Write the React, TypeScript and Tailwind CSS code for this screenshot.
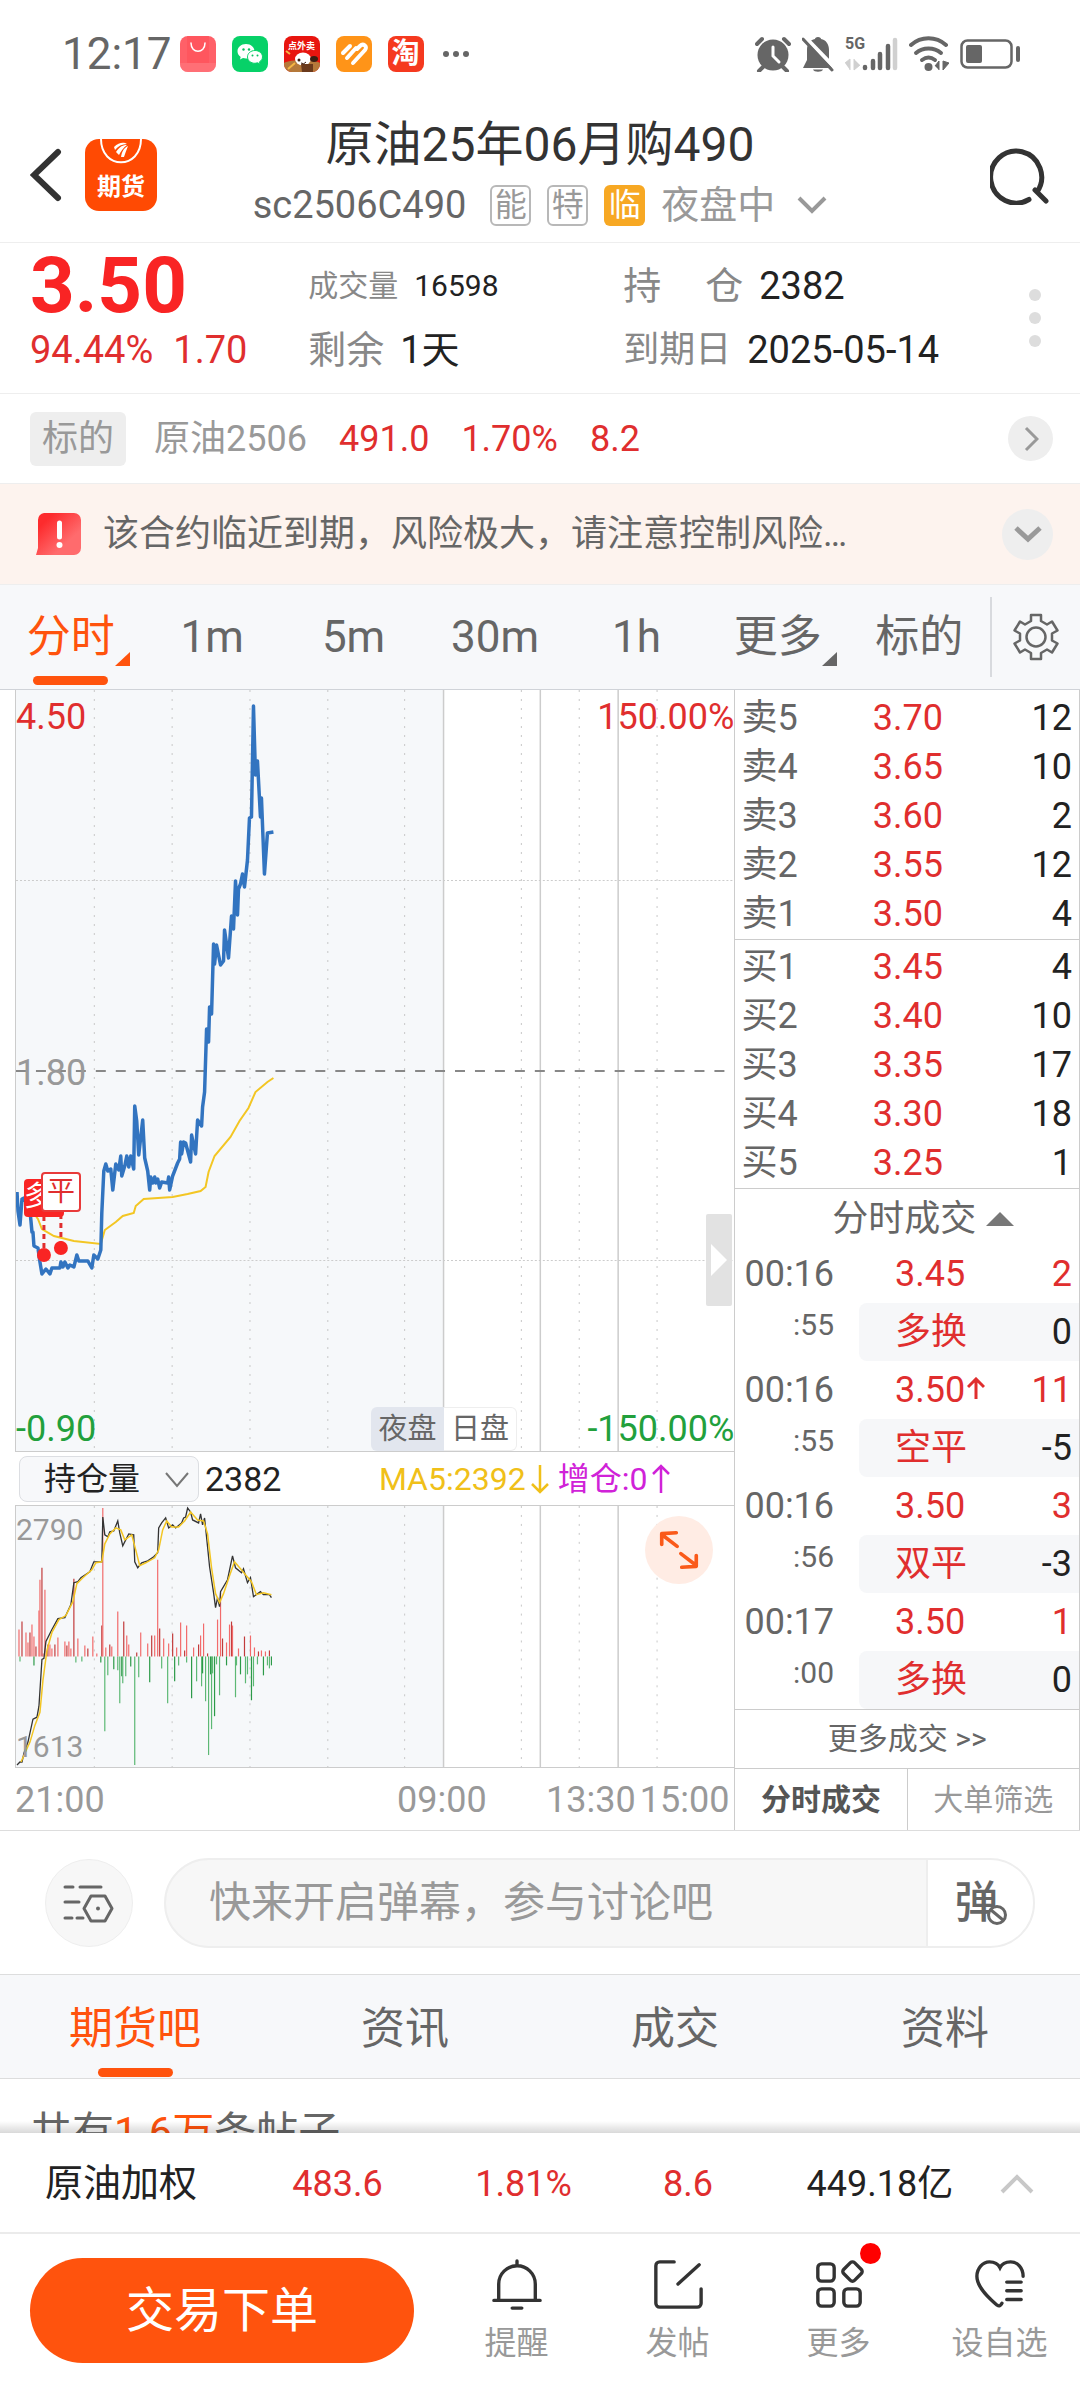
import React from 'react';

/**
 * Option contract quote page: header, intraday chart, order book and trade bar
 */

interface BookRow {
  label: string;
  price: string;
  volume: number;
}

interface Trade {
  time: string;
  seconds: string;
  price: string;
  rising?: boolean;
  volume: number;
  kind: string;
  change: number;
}

const asks: BookRow[] = [
  { label: '卖5', price: '3.70', volume: 12 },
  { label: '卖4', price: '3.65', volume: 10 },
  { label: '卖3', price: '3.60', volume: 2 },
  { label: '卖2', price: '3.55', volume: 12 },
  { label: '卖1', price: '3.50', volume: 4 },
];

const bids: BookRow[] = [
  { label: '买1', price: '3.45', volume: 4 },
  { label: '买2', price: '3.40', volume: 10 },
  { label: '买3', price: '3.35', volume: 17 },
  { label: '买4', price: '3.30', volume: 18 },
  { label: '买5', price: '3.25', volume: 1 },
];

const trades: Trade[] = [
  { time: '00:16', seconds: ':55', price: '3.45', volume: 2, kind: '多换', change: 0 },
  { time: '00:16', seconds: ':55', price: '3.50', rising: true, volume: 11, kind: '空平', change: -5 },
  { time: '00:16', seconds: ':56', price: '3.50', volume: 3, kind: '双平', change: -3 },
  { time: '00:17', seconds: ':00', price: '3.50', volume: 1, kind: '多换', change: 0 },
];

// Chart series, in chart units (720 wide)
const priceLine =
  '1,502 2,521 4,535 6,509 8,508 14,521 15,531 16,542 17,542 18,556 22,558 24,572 26,584 30,579 34,584 36,578 44,578 45,572 47,577 49,572 52,578 54,575 58,577 61,565 63,571 72,571 76,578 78,565 82,569 85,560 86,523 88,481 90,474 92,481 95,479 97,500 100,474 103,480 105,466 106,486 109,476 111,466 113,477 115,466 118,479 119,416 121,431 123,465 127,430 129,468 132,481 134,500 135,487 137,493 139,487 140,493 142,489 144,498 146,492 152,493 153,487 154,500 157,486 162,473 164,469 165,452 166,464 168,452 170,453 175,472 176,445 180,464 182,430 186,436 187,417 189,402 191,339 193,352 194,317 196,324 198,254 199,274 201,255 205,275 208,271 209,240 213,268 216,226 218,239 220,191 222,225 223,199 225,194 227,184 229,197 232,170 234,128 236,127 238,16 240,85 242,71 245,127 246,108 249,184 252,143 258,142';

const averageLine =
  '14,518 22,529 26,539 38,546 58,551 85,554 89,540 100,532 107,526 118,523 120,516 128,509 157,507 172,504 185,501 190,497 193,482 199,466 215,447 224,431 233,418 240,402 252,392 258,388';

const interestLine =
  '1,260 4,257 6,257 8,248 12,237 17,214 21,212 23,201 26,154 28,153 30,136 36,124 42,113 49,112 55,99 58,77 62,76 65,72 74,66 78,56 86,56 87,11 89,29 92,31 94,26 98,25 102,15 104,27 107,40 113,28 118,29 119,56 122,62 126,57 132,55 138,51 142,47 143,22 146,17 150,12 153,22 157,19 160,22 166,17 168,12 170,11 172,2 175,6 177,14 183,17 185,8 187,19 189,12 192,41 194,61 198,87 200,102 202,92 204,101 205,86 212,74 217,50 220,62 226,67 228,63 232,77 235,72 238,91 245,86 248,89 254,89 256,92';

const interestMaLine =
  '5,257 9,248 14,237 19,220 24,207 27,175 31,145 36,127 43,114 50,110 57,96 61,78 67,72 76,64 80,57 86,56 89,38 94,28 100,22 105,24 109,34 116,29 120,44 124,60 130,57 139,52 143,44 147,24 151,15 156,21 163,21 169,15 175,6 182,14 188,15 192,28 196,62 200,88 204,97 208,88 214,70 219,56 225,63 230,69 236,76 241,89 248,87 256,89';

const increaseBars = [
  [3, 27], [6, 35], [10, 24], [12, 14], [14, 24], [16, 32], [18, 20], [20, 10], [23, 46], [24, 77], [26, 89],
  [27, 3], [29, 67], [32, 12], [34, 12], [36, 8], [39, 12], [42, 19], [49, 15], [51, 11], [53, 15], [55, 8],
  [58, 78], [62, 18], [69, 11], [72, 8], [77, 20], [81, 3], [86, 31], [87, 149], [90, 9], [94, 12], [96, 10],
  [102, 45], [108, 35], [111, 21], [113, 12], [121, 4], [125, 24], [132, 13], [136, 21], [139, 21], [142, 97],
  [144, 28], [148, 18], [153, 13], [157, 23], [161, 9], [165, 34], [169, 6], [171, 31], [178, 9], [183, 12],
  [185, 21], [188, 33], [192, 3], [202, 37], [205, 64], [207, 18], [211, 14], [214, 32], [216, 35], [217, 31],
  [223, 8], [229, 20], [235, 21], [239, 9], [243, 5], [246, 6], [250, 5], [254, 6],
];

const decreaseBars = [
  [4, 5], [18, 9], [60, 6], [66, 5], [85, 6], [89, 75], [92, 19], [98, 13], [102, 14], [104, 47], [106, 20],
  [107, 27], [110, 20], [115, 10], [119, 109], [123, 21], [134, 26], [146, 12], [152, 47], [159, 25], [163, 9],
  [171, 6], [176, 42], [181, 25], [186, 30], [187, 17], [190, 45], [193, 99], [195, 18], [196, 73], [197, 17],
  [199, 60], [201, 8], [204, 39], [211, 9], [220, 41], [221, 9], [225, 18], [230, 27], [232, 18], [236, 44],
  [238, 30], [242, 8], [248, 19], [252, 9], [254, 12], [256, 9],
];

const dottedColumns = [78, 156, 234, 312, 389, 506, 564, 642];
const solidColumns = [428, 525, 603];

const StatusBar = () => (
  <div className="flex h-[108px] shrink-0 items-center justify-between pl-[62px] pr-[60px] text-[#666]">
    <div className="flex items-center gap-4">
      <span className="-mr-2 text-[44px] leading-none">12:17</span>
      <svg className="size-9" viewBox="0 0 36 36">
        <rect width="36" height="36" rx="8" fill="#ff6068" />
        <path d="M7 0h22v27H7z" fill="#ff5058" opacity=".6" />
        <path d="M0 27h36v1a8 8 0 0 1-8 8H8a8 8 0 0 1-8-8z" fill="#ff7a80" opacity=".6" />
        <path d="M11 7c0 11 14 11 14 0" fill="none" stroke="#fff" strokeWidth="1.5" strokeLinecap="round" />
      </svg>
      <svg className="size-9" viewBox="0 0 36 36">
        <rect width="36" height="36" rx="8" fill="#07d168" />
        <path d="M14 8c-5 0-8.500 3.400-8.500 7.300 0 2.300 1.200 4.200 3.200 5.600L8 23.500l3-1.500 3 .6c5 0 8.500-3.300 8.500-7.300S19 8 14 8z" fill="#fff" />
        <path d="M23 14.500c-4.300 0-7.500 2.900-7.500 6.400s3.200 6.400 7.500 6.400l2.600-.5 2.600 1.400-.7-2.400c1.900-1.200 3-2.900 3-4.900 0-3.500-3.200-6.400-7.500-6.400z" fill="#fff" stroke="#07d168" strokeWidth="1" />
        <g fill="#07c160">
          <circle cx="11.500" cy="13.500" r="1.200" />
          <circle cx="17" cy="13.500" r="1.200" />
          <circle cx="20.500" cy="19.500" r="1" />
          <circle cx="25.500" cy="19.500" r="1" />
        </g>
      </svg>
      <span className="relative size-9 overflow-hidden rounded-lg bg-[#e8150f]">
        <svg className="absolute inset-0" viewBox="0 0 36 36">
          <path d="M0 27c6-4 30-4 36 0v9H0z" fill="#b5793a" />
          <ellipse cx="19" cy="23" rx="8" ry="6.500" fill="#fff" />
          <ellipse cx="30" cy="23" rx="4" ry="3" fill="#3a1d12" />
          <path d="M17 28h12v8H18z" fill="#6b3a1c" />
          <path d="M2 15l4 3M4 33l7-6" stroke="#f5b544" strokeWidth="2" />
          <circle cx="15" cy="24" r="1.500" fill="#3a1d12" />
          <path d="M17 27q3 2 5-1" stroke="#3a1d12" fill="none" />
        </svg>
        <span className="relative block pt-[5px] text-center text-[9px] leading-[10px] font-bold text-white">点外卖</span>
      </span>
      <svg className="size-9" viewBox="0 0 36 36">
        <rect width="36" height="36" rx="8" fill="#ff9418" />
        <g fill="none" stroke="#fff" strokeLinecap="round" strokeWidth="4">
          <path d="M7 17l7-7" />
          <path d="M11 22l9-10" />
          <path d="M17 27l12-13c3-4-2-7-5-4l-3 3" />
        </g>
      </svg>
      <span className="flex size-9 items-center justify-center rounded-lg bg-[#f5391f] text-[28px] leading-none font-bold text-white">淘</span>
      <svg className="h-9 w-8" viewBox="0 0 32 36" fill="#666">
        <circle cx="6" cy="18" r="3" />
        <circle cx="16" cy="18" r="3" />
        <circle cx="26" cy="18" r="3" />
      </svg>
    </div>
    <div className="flex items-center gap-[11px]">
      <svg className="size-9" viewBox="0 0 36 36">
        <circle cx="18" cy="19" r="15.500" fill="#666" />
        <path d="M2 8l5-5M34 8l-5-5M8 31l-4 4M28 31l4 4" stroke="#666" strokeWidth="4" strokeLinecap="round" />
        <path d="M18 11v9l6 6" fill="none" stroke="#fff" strokeWidth="3" strokeLinecap="round" />
      </svg>
      <svg className="h-9 w-8" viewBox="0 0 32 36">
        <path d="M16 1c-2 0-3 1-3 2-5 1-8 5-8 11v10L1 32h29l-3-7V14c0-6-3-10-8-11 0-1-1-2-3-2zM11 33.500h10c-1 3-9 3-10 0z" fill="#666" />
        <path d="M3 1l30 31" stroke="#fff" strokeWidth="4" />
        <path d="M1 3l29 31" stroke="#666" strokeWidth="3" strokeLinecap="round" />
      </svg>
      <div className="relative h-9 w-[53px]">
        <span className="absolute top-0 left-0 text-[16px] leading-4 font-bold">5G</span>
        <svg className="h-9 w-[53px]" viewBox="0 0 53 36">
          <path d="M0 27l5-4v11M9 23v11l6-5" fill="#d0d0d0" stroke="#d0d0d0" />
          <g strokeWidth="4.500" strokeLinecap="round" stroke="#666">
            <path d="M20 31v1M28 25v7M35 18v14M43 10v22" />
            <path d="M50 4v28" stroke="#d0d0d0" />
          </g>
        </svg>
      </div>
      <svg className="h-9 w-10" viewBox="0 0 40 36">
        <g fill="none" stroke="#666" strokeWidth="4" strokeLinecap="round">
          <path d="M2 9c10-9 25-9 35 0" />
          <path d="M7 17c7-6 18-6 25 0" />
          <path d="M13 24c4-3 9-3 13 0" />
        </g>
        <circle cx="19.500" cy="31" r="4" fill="#666" />
        <path d="M26 30l4-5v9M34 25v9l6-7z" fill="#666" stroke="#666" />
      </svg>
      <svg className="h-9 w-[60px]" viewBox="0 0 60 36">
        <rect x="1.500" y="4.500" width="50" height="27" rx="6" fill="none" stroke="#666" strokeWidth="2.500" />
        <rect x="6" y="9" width="16" height="18" rx="2" fill="#666" />
        <rect x="56" y="10" width="4" height="16" rx="2" fill="#666" />
      </svg>
    </div>
  </div>
);

const Header = () => (
  <header className="flex h-[135px] shrink-0 items-center border-b border-[#eee] px-[30px]">
    <div className="flex w-[130px] items-center gap-[23px]">
      <button type="button" aria-label="返回">
        <svg className="h-[54px] w-8" viewBox="0 0 32 54" fill="none" stroke="#333" strokeWidth="6" strokeLinecap="round">
          <path d="M28 4L4 27l24 23" />
        </svg>
      </button>
      <div className="relative size-[72px] shrink-0 overflow-hidden rounded-[14px] bg-[#ff4a03]">
        <svg className="absolute inset-0" viewBox="0 0 72 72">
          <path d="M16 0c0 31 40 31 40 0" fill="none" stroke="#fff" strokeWidth="2" />
          <path d="M29 8c5-5 10-5 13-3-5 0-9 2-12 6zM31 13c4-6 7-7 11-7-4 3-6 6-8 10zM36 18c1-6 3-9 7-11-2 5-3 8-4 11z" fill="#fff" />
        </svg>
        <span className="relative block pt-[34px] text-center text-[24px] leading-7 font-bold text-white">期货</span>
      </div>
    </div>
    <div className="flex flex-1 flex-col items-center">
      <h1 className="text-5xl leading-[60px] text-[#333]">原油25年06月购490</h1>
      <div className="flex h-[60px] items-center gap-4">
        <span className="mr-2 text-[38px] leading-none text-[#666]">sc2506C490</span>
        <span className="flex size-[41px] items-center justify-center rounded-md border-2 border-[#b8b8b8] text-[32px] leading-none text-[#999]">能</span>
        <span className="flex size-[41px] items-center justify-center rounded-md border-2 border-[#b8b8b8] text-[32px] leading-none text-[#999]">特</span>
        <span className="flex size-[41px] items-center justify-center rounded-md bg-[#f7a823] text-[32px] leading-none text-white">临</span>
        <button type="button" className="flex items-center gap-[22px] text-[38px] leading-none text-[#999]">
          夜盘中
          <svg className="h-5 w-[30px]" viewBox="0 0 30 20" fill="none" stroke="#999" strokeWidth="4">
            <path d="M2 3l13 13L28 3" />
          </svg>
        </button>
      </div>
    </div>
    <div className="flex w-[130px] justify-end">
      <button type="button" aria-label="搜索">
        <svg className="size-[60px]" viewBox="0 0 60 60" fill="none" stroke="#333" strokeWidth="5" strokeLinecap="round">
          <path d="M39 54.500a25.500 26 0 1 1 8-7.500M45 45l11 11" />
        </svg>
      </button>
    </div>
  </header>
);

const QuoteSummary = () => (
  <section className="grid shrink-0 grid-cols-[53fr_60fr_70fr_17fr] items-center border-b border-[#eee] py-[11px] pl-[30px] text-[38px] leading-[64px] whitespace-nowrap">
    <div className="text-[#e02e2e]">
      <div className="text-[78px] font-bold text-[#f92424]">3.50</div>
      <div>
        94.44%<span className="ml-5">1.70</span>
      </div>
    </div>
    <dl className="text-[#222]">
      <div className="flex gap-4 text-[30px]">
        <dt className="text-[#888]">成交量</dt>
        <dd>16598</dd>
      </div>
      <div className="flex gap-4">
        <dt className="text-[#888]">剩余</dt>
        <dd>1天</dd>
      </div>
    </dl>
    <dl className="text-[#222]">
      <div className="flex gap-4">
        <dt className="flex w-[120px] justify-between text-[#888]">
          <span>持</span>
          <span>仓</span>
        </dt>
        <dd>2382</dd>
      </div>
      <div className="flex gap-4">
        <dt className="text-[36px] text-[#888]">到期日</dt>
        <dd>2025-05-14</dd>
      </div>
    </dl>
    <button type="button" aria-label="更多行情" className="flex flex-col items-center gap-[11px]">
      <span className="size-3 rounded-full bg-[#ddd]" />
      <span className="size-3 rounded-full bg-[#ddd]" />
      <span className="size-3 rounded-full bg-[#ddd]" />
    </button>
  </section>
);

const UnderlyingRow = () => (
  <section className="flex h-[90px] shrink-0 items-center border-b border-[#eee] pr-[27px] pl-[30px] text-[36px] leading-[54px] text-[#e02e2e]">
    <span className="rounded-md bg-[#eee] px-3 text-[#999]">标的</span>
    <span className="ml-7 text-[#999]">原油2506</span>
    <span className="ml-8">491.0</span>
    <span className="ml-8">1.70%</span>
    <span className="ml-8">8.2</span>
    <button type="button" aria-label="查看标的" className="ml-auto flex size-[45px] items-center justify-center rounded-full bg-[#eee]">
      <svg className="h-7 w-4" viewBox="0 0 16 28" fill="none" stroke="#999" strokeWidth="3">
        <path d="M3 3l11 11L3 25" />
      </svg>
    </button>
  </section>
);

const RiskNotice = () => (
  <section className="flex h-[101px] shrink-0 items-center border-b border-[#eee] bg-[#fdf3ee] pr-[27px] pl-9">
    <svg className="h-11 w-[45px]" viewBox="0 0 45 44">
      <defs>
        <linearGradient id="notice" x1="0" y1="0" x2="1" y2="1">
          <stop offset=".2" stopColor="#fd2b2d" />
          <stop offset=".7" stopColor="#ff6b6d" />
        </linearGradient>
      </defs>
      <path d="M8 1h30a7 7 0 0 1 7 7v28a7 7 0 0 1-7 7H0l2-7V8a7 7 0 0 1 6-7z" fill="url(#notice)" />
      <path d="M23.500 11v14" stroke="#fff" strokeWidth="5" strokeLinecap="round" />
      <circle cx="23.500" cy="33" r="3" fill="#fff" />
    </svg>
    <p className="ml-[22px] truncate text-[36px] leading-[54px] text-[#666]">该合约临近到期，风险极大，请注意控制风险…</p>
    <button type="button" aria-label="展开" className="ml-auto flex size-[51px] shrink-0 items-center justify-center rounded-full bg-[#eee]">
      <svg className="h-5 w-7" viewBox="0 0 28 20" fill="none" stroke="#999" strokeWidth="5">
        <path d="M2 4l12 11L26 4" />
      </svg>
    </button>
  </section>
);

const Corner = () => (
  <svg className="absolute -right-4 bottom-0 h-4 w-4 fill-current" viewBox="0 0 16 16">
    <path d="M15 1v14H0z" />
  </svg>
);

const PeriodTabs = () => {
  const periods = ['分时', '1m', '5m', '30m', '1h', '更多', '标的'];
  return (
    <nav className="flex h-[105px] shrink-0 items-center border-b border-[#d0d3d8] bg-[#f7f8fa] text-[44px] leading-[60px] text-[#666]">
      {periods.map((period) => (
        <button
          key={period}
          type="button"
          className={`relative flex h-full flex-1 items-center justify-center ${period === '分时' ? 'text-[#ff530d]' : ''}`}
        >
          <span className="relative">
            {period}
            {(period === '分时' || period === '更多') && <Corner />}
          </span>
          {period === '分时' && <span className="absolute bottom-1 h-[9px] w-[75px] rounded-full bg-[#ff530d]" />}
        </button>
      ))}
      <button type="button" aria-label="设置" className="flex h-20 w-[90px] items-center justify-center border-l-2 border-[#d8dade]">
        <svg className="size-12" viewBox="0 0 48 48" fill="none" stroke="#666" strokeWidth="2.500" strokeLinejoin="round">
          <path d="M19 2h10v6l6 3.500 5-3 5.500 9-5.500 3v7l5.500 3-5.500 9-5-3-6 3.500v6H19v-6l-6-3.500-5 3-5.500-9 5.500-3v-7l-5.500-3 5.500-9 5 3L19 8z" />
          <circle cx="24" cy="24" r="9.500" />
        </svg>
      </button>
    </nav>
  );
};

const GridColumns = ({ height }: { height: number }) => (
  <>
    <rect width="428" height={height} fill="#f6f8fa" />
    {dottedColumns.map((x) => (
      <path key={x} d={`M${x}.5 0V${height}`} stroke="#c8c8c8" strokeDasharray="2 7" />
    ))}
    {solidColumns.map((x) => (
      <path key={x} d={`M${x}.5 0V${height}`} stroke="#ccc" strokeWidth="1.500" />
    ))}
  </>
);

const PriceChart = () => (
  <div className="relative ml-[15px] h-[762px] border-b border-l border-[#ccc] text-[36px] leading-[42px]">
    <svg className="h-full w-full" viewBox="0 0 720 761" preserveAspectRatio="none" fill="none">
      <GridColumns height={761} />
      <path d="M0 190.500H720M0 570.500H720" stroke="#ccc" strokeDasharray="2 2" />
      <path d="M0 381H720" stroke="#888" strokeWidth="2" strokeDasharray="10 10" />
      <polyline points={averageLine} stroke="#f3c623" strokeWidth="2" />
      <polyline points={priceLine} stroke="#3274c0" strokeWidth="3.500" strokeLinejoin="round" />
      <path d="M28 526v36M45 524v32" stroke="#e02e2e" strokeWidth="3" strokeDasharray="5 4" />
      <circle cx="28" cy="565" r="7" fill="#f92424" />
      <circle cx="45" cy="558" r="7" fill="#f92424" />
    </svg>
    <span className="absolute top-[489px] left-2 h-[38px] w-10 rounded bg-[#f92424] text-[28px] leading-9 text-white">多</span>
    <span className="absolute top-[482px] left-[25px] flex h-10 w-10 items-center justify-center rounded border-2 border-[#e83a3a] bg-white text-[28px] text-[#e02e2e]">
      平
    </span>
    <span className="absolute top-[6px] left-0 text-[#e02e2e]">4.50</span>
    <span className="absolute top-[362px] left-0 text-[#999]">1.80</span>
    <span className="absolute bottom-px left-0 text-[#22a03c]">-0.90</span>
    <span className="absolute top-[6px] right-0 text-[#e02e2e]">150.00%</span>
    <span className="absolute right-0 bottom-px text-[#22a03c]">-150.00%</span>
    <div className="absolute bottom-0 left-[355px] flex text-[29px] text-[#666]">
      <button type="button" className="w-[73px] rounded-l-md bg-[#e2e6ee]">夜盘</button>
      <button type="button" className="w-[73px] rounded-r-md border border-l-0 border-[#eee] bg-white">日盘</button>
    </div>
    <button type="button" aria-label="收起盘口" className="absolute top-[524px] right-[2px] h-[92px] w-[26px] rounded-xs bg-[#e2e2e2]">
      <svg className="mx-auto h-8 w-4" viewBox="0 0 16 32" fill="#fff">
        <path d="M0 0l16 16L0 32z" />
      </svg>
    </button>
  </div>
);

const InterestChart = () => (
  <>
    <div className="ml-[19px] flex h-[53px] items-center text-[34px] leading-none text-[#222]">
      <div className="relative">
        <select
          aria-label="指标"
          defaultValue="持仓量"
          className="h-[46px] w-[180px] appearance-none rounded-lg border border-[#dcdee2] bg-[#f7f8fa] pl-6 text-[32px] leading-[44px]"
        >
          <option>持仓量</option>
          <option>成交量</option>
        </select>
        <svg className="pointer-events-none absolute top-4 right-2.5 h-4 w-6" viewBox="0 0 24 16" fill="none" stroke="#777" strokeWidth="2">
          <path d="M1 1l11 13L23 1" />
        </svg>
      </div>
      <span className="ml-1.5">2382</span>
      <div className="ml-auto flex pr-[63px] text-[32px]">
        <span className="flex items-center gap-1 text-[#f0c019]">
          MA5:2392
          <svg className="h-[30px] w-5" viewBox="0 0 20 30" fill="none" stroke="currentColor" strokeWidth="2.500">
            <path d="M10 1v27M2 20l8 8 8-8" />
          </svg>
        </span>
        <span className="ml-2 flex items-center gap-1 text-[#d022d8]">
          增仓:0
          <svg className="h-[30px] w-5" viewBox="0 0 20 30" fill="none" stroke="currentColor" strokeWidth="2.500">
            <path d="M10 29V2M2 10l8-8 8 8" />
          </svg>
        </span>
      </div>
    </div>
    <div className="relative ml-[15px] h-[263px] border-y border-l border-[#ccc] text-[30px] leading-9 text-[#999]">
      <span className="absolute top-[6px] left-0">2790</span>
      <span className="absolute bottom-[2px] left-0">1613</span>
      <svg className="h-full w-full" viewBox="0 0 720 262" preserveAspectRatio="none" fill="none">
        <GridColumns height={262} />
        {increaseBars.map(([x, size], i) => (
          <path key={x} d={`M${x} 151v-${size}`} stroke={i % 3 === 1 ? '#c23b3b' : '#f26b6b'} strokeWidth="1.200" />
        ))}
        {decreaseBars.map(([x, size], i) => (
          <path key={x} d={`M${x} 151v${size}`} stroke={i % 3 === 1 ? '#2c9a48' : '#5cb874'} strokeWidth="1.200" />
        ))}
        <polyline points={interestLine} stroke="#333" strokeWidth="1.300" />
        <polyline points={interestMaLine} stroke="#f3c623" strokeWidth="1.500" />
      </svg>
      <button type="button" aria-label="全屏" className="absolute top-[10px] right-[21px] flex size-[68px] items-center justify-center rounded-full bg-[#ffece4]">
        <svg className="size-10" viewBox="0 0 44 44" fill="none" stroke="#fa5a1a" strokeWidth="4" strokeLinejoin="round" strokeLinecap="round">
          <path d="M20 18L3 5M3 16V4l16-1M24 26l17 13M41 28v12l-16 1" />
        </svg>
      </button>
    </div>
    <div className="relative ml-[15px] h-[61px] text-[36px] leading-[64px] text-[#999]">
      <span className="absolute left-0">21:00</span>
      <span className="absolute left-[382px]">09:00</span>
      <span className="absolute right-[5px] flex gap-1">
        <span>13:30</span>
        <span>15:00</span>
      </span>
    </div>
  </>
);

const BookTable = ({ rows, label }: { rows: BookRow[]; label: string }) => (
  <table aria-label={label} className="w-full table-fixed text-[36px] leading-[49px]">
    <tbody>
      {rows.map((row) => (
        <tr key={row.label}>
          <th scope="row" className="w-[40%] p-0 pl-[6px] text-left font-normal text-[#666]">{row.label}</th>
          <td className="p-0 text-[#e02e2e]">{row.price}</td>
          <td className="p-0 pr-[7px] text-right text-[#222]">{row.volume}</td>
        </tr>
      ))}
    </tbody>
  </table>
);

const SidePanel = () => (
  <aside className="border-x border-[#ccc]">
    <div className="border-b border-[#ccc] pt-1">
      <BookTable rows={asks} label="卖盘" />
    </div>
    <div className="border-b border-[#ccc] pt-[3px]">
      <BookTable rows={bids} label="买盘" />
    </div>
    <button type="button" className="flex h-14 w-full items-center justify-center gap-2.5 pt-1 pl-8 text-[36px] leading-none text-[#666]">
      分时成交
      <svg className="h-3.5 w-7 fill-[#777]" viewBox="0 0 28 14">
        <path d="M14 0l14 14H0z" />
      </svg>
    </button>
    <table aria-label="分时成交" className="w-full table-fixed text-[36px] leading-[58px]">
      {trades.map((trade, i) => (
        <tbody key={i}>
          <tr>
            <th scope="row" className="w-[36%] p-0 pr-[25px] text-right font-normal text-[#666]">{trade.time}</th>
            <td className="w-[38%] p-0 pl-9 whitespace-nowrap text-[#e02e2e]">
              {trade.price}
              {trade.rising && (
                <svg className="mb-2 ml-[2px] inline h-[22px] w-[18px]" viewBox="0 0 18 22" fill="none" stroke="currentColor" strokeWidth="3">
                  <path d="M9 22V3M1 10l8-8 8 8" />
                </svg>
              )}
            </td>
            <td className="p-0 pr-[7px] text-right text-[#e02e2e]">{trade.volume}</td>
          </tr>
          <tr>
            <td className="p-0 pr-[25px] text-right align-top text-[30px] leading-[44px] text-[#666]">{trade.seconds}</td>
            <td className="rounded-l-lg bg-[#f6f7f9] p-0 pl-9 text-[#e02e2e]">{trade.kind}</td>
            <td className="bg-[#f6f7f9] p-0 pr-[7px] text-right text-[#222]">{trade.change}</td>
          </tr>
        </tbody>
      ))}
    </table>
    <a href="#trades" className="block border-t border-[#ccc] text-center text-[30px] leading-[58px] text-[#666]">
      更多成交 &gt;&gt;
    </a>
    <div className="flex border-t border-[#ccc] text-[30px] leading-[61px]">
      <button type="button" className="flex-1 border-r border-[#ccc] font-bold text-[#555]">分时成交</button>
      <button type="button" className="flex-1 text-[#999]">大单筛选</button>
    </div>
  </aside>
);

const DanmuBar = () => (
  <form className="flex h-[144px] shrink-0 items-center gap-[31px] border-b border-[#ddd] px-[45px]">
    <button type="button" aria-label="弹幕设置" className="flex size-[88px] shrink-0 items-center justify-center rounded-full border border-[#eee] bg-[#f7f7f7]">
      <svg className="h-10 w-[52px]" viewBox="0 0 52 40" fill="none" stroke="#666" strokeWidth="3" strokeLinecap="round">
        <path d="M2 4h8M17 4h21M2 19h14M2 35h7M14 35h6" />
        <path d="M28 13h14l7 12.500L42 38H28l-7-12.500z" strokeLinejoin="round" />
        <circle cx="35" cy="25.500" r="2" fill="#666" stroke="none" />
      </svg>
    </button>
    <div className="flex h-[90px] flex-1 overflow-hidden rounded-full border-2 border-[#eee] bg-[#f7f7f7]">
      <input
        type="text"
        aria-label="弹幕"
        placeholder="快来开启弹幕，参与讨论吧"
        className="min-w-0 flex-1 pl-[43px] text-[42px] placeholder:text-[#999] focus:outline-none"
      />
      <button type="button" className="relative w-[107px] border-l-2 border-[#eee] bg-white pr-2 text-[44px] leading-none font-medium text-[#666]">
        弹
        <svg className="absolute right-[25px] bottom-5 size-[22px]" viewBox="0 0 22 22" fill="#fff" stroke="#666" strokeWidth="3">
          <circle cx="11" cy="11" r="8.500" />
          <path d="M5 6l12 10" />
        </svg>
      </button>
    </div>
  </form>
);

const ContentTabs = () => (
  <nav className="flex h-[104px] shrink-0 border-b border-[#ddd] bg-[#f7f8fa] text-[44px] text-[#666]">
    {['期货吧', '资讯', '成交', '资料'].map((tab, i) => (
      <button key={tab} type="button" className={`relative flex flex-1 items-center justify-center pt-1 ${i === 0 ? 'text-[#ff530d]' : ''}`}>
        {tab}
        {i === 0 && <span className="absolute bottom-px h-[9px] w-[75px] rounded-full bg-[#ff530d]" />}
      </button>
    ))}
  </nav>
);

const actions = [
  { label: '提醒', icon: <path d="M7 43V26a19 19 0 0 1 38 0v17M2 43h48M26 6V2M21 51h10" /> },
  { label: '发帖', icon: <path d="M22 3H7a4 4 0 0 0-4 4v39a4 4 0 0 0 4 4h39a4 4 0 0 0 4-4V31M26 26L48 6" /> },
  {
    label: '更多',
    icon: (
      <>
        <rect x="4" y="5" width="17" height="18" rx="4" />
        <rect x="4" y="31" width="17" height="18" rx="4" />
        <rect x="31" y="31" width="17" height="18" rx="4" />
        <rect x="32" y="5" width="16" height="16" rx="3" transform="rotate(45 40 13)" />
      </>
    ),
  },
  { label: '设自选', icon: <path d="M50 18c0-9-6-15-13-15-5 0-9 2-11 6-2-4-6-6-11-6C8 3 2 10 2 18c0 12 14 24 21 30q3 2 5-2M33 24h15M33 33h15M33 42h15" /> },
];

const Footer = () => (
  <footer className="relative shrink-0 bg-white">
    <div className="absolute inset-x-0 -top-3 h-3 bg-linear-to-t from-black/15 to-transparent" />
    <div className="flex h-[101px] items-center border-b-2 border-[#ebebeb] pt-[2px] pr-[46px] pl-[45px] text-[36px] text-[#e02e2e]">
      <span className="w-[25%] text-[38px] text-[#222]">原油加权</span>
      <span className="w-[18.5%]">483.6</span>
      <span className="w-[19%]">1.81%</span>
      <span className="w-[14.5%]">8.6</span>
      <span className="text-[#222]">449.18亿</span>
      <button type="button" aria-label="展开指数" className="ml-auto">
        <svg className="h-5 w-[34px]" viewBox="0 0 34 20" fill="none" stroke="#c8c8c8" strokeWidth="4">
          <path d="M2 18L17 3l15 15" />
        </svg>
      </button>
    </div>
    <div className="flex items-center gap-[22px] pt-6 pb-[25px] pl-[30px]">
      <button type="button" className="h-[105px] w-[384px] shrink-0 rounded-full bg-[#ff530d] text-5xl text-white">交易下单</button>
      <div className="flex flex-1">
        {actions.map(({ label, icon }) => (
          <button key={label} type="button" className="flex flex-1 flex-col items-center gap-3 text-[32px] leading-10 text-[#999]">
            <span className="relative">
              <svg className="size-[52px]" viewBox="0 0 52 54" fill="none" stroke="#333" strokeWidth="3.500" strokeLinecap="round">
                {icon}
              </svg>
              {label === '更多' && <span className="absolute -top-4 -right-4 size-[21px] rounded-full bg-[#f00]" />}
            </span>
            {label}
          </button>
        ))}
      </div>
    </div>
  </footer>
);

export default function App() {
  return (
    <div className="flex h-screen flex-col overflow-hidden bg-white font-[Roboto,'Noto_Sans_CJK_SC',sans-serif]">
      <StatusBar />
      <Header />
      <main className="flex min-h-0 flex-1 flex-col">
        <QuoteSummary />
        <UnderlyingRow />
        <RiskNotice />
        <PeriodTabs />
        <div className="grid shrink-0 grid-cols-[68%_32%] border-b border-[#ddd]">
          <div>
            <PriceChart />
            <InterestChart />
          </div>
          <SidePanel />
        </div>
        <DanmuBar />
        <ContentTabs />
        <p className="shrink-0 px-[30px] pt-6 text-[42px] leading-[60px] text-[#666]">
          共有<span className="text-[#ff530d]">1.6万</span>条帖子
        </p>
      </main>
      <Footer />
    </div>
  );
}
